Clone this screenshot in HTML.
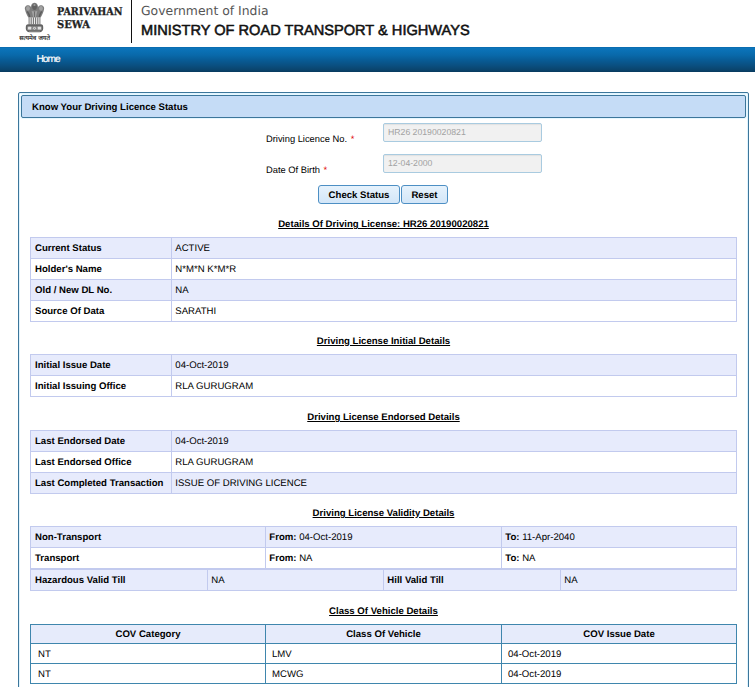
<!DOCTYPE html>
<html lang="en">
<head>
<meta charset="utf-8">
<title>Know Your Driving Licence Status</title>
<style>
*{box-sizing:border-box;}
html,body{margin:0;padding:0;background:#fff;}
body{text-rendering:geometricPrecision;width:755px;height:687px;overflow:hidden;position:relative;font-family:"Liberation Sans",Arial,sans-serif;font-size:9.6px;color:#000;}
#hdr{position:absolute;left:0;top:0;width:755px;height:47px;background:#fff;}
#emblem{position:absolute;left:14px;top:0;}
#brand{position:absolute;left:57px;top:0;}
#vline{position:absolute;left:131px;top:0;width:1px;height:43px;background:#111;}
#gov{position:absolute;left:141px;top:3px;font-family:"DejaVu Sans","Liberation Sans",sans-serif;font-size:12.4px;line-height:16px;color:#555;white-space:nowrap;}
#min{position:absolute;left:141px;top:22px;font-family:"Liberation Sans",sans-serif;font-weight:normal;-webkit-text-stroke:0.55px #111;font-size:14.6px;line-height:18px;color:#111;white-space:nowrap;}
#nav{position:absolute;left:0;top:47px;width:755px;height:25px;background:linear-gradient(#0a6aad 0%,#0b74ba 6%,#0969aa 32%,#085c96 52%,#0a5082 72%,#0a446c 92%,#083a5e 100%);}
#nav a{position:absolute;left:36.5px;top:6px;color:#fff;font-weight:normal;font-size:10.2px;line-height:14px;letter-spacing:-1px;text-decoration:none;-webkit-text-stroke:0.2px #fff;}
#panel{position:absolute;left:18px;top:92px;width:731px;height:620px;border:1px solid #3c769b;border-radius:2px;background:#fff;box-shadow:inset 0 0 0 1px #e0f4fe;}
#phead{position:absolute;left:2px;top:2px;width:725px;height:23px;border:1px solid #3c769b;border-radius:2px;box-shadow:0 0 0 1px #e6f7ff;background:#c5dcf6;font-weight:bold;line-height:23px;padding-left:10px;color:#000;}
.lbl{position:absolute;left:247px;white-space:nowrap;line-height:12px;font-size:9.35px;color:#000;}
.lbl b{color:#e00000;font-weight:normal;margin-left:1px;}
.inp{position:absolute;left:364px;width:159px;height:19px;border:1px solid #a9cbe0;border-radius:2px;background:#f1f1f1;color:#a2a2a2;font-size:8.7px;line-height:17px;padding:0 0 0 4px;box-shadow:inset 0 1px 1px #e2e2e2;}
.btn{position:absolute;top:92px;height:19px;border:1px solid #4d8fc4;border-radius:3px;background:linear-gradient(#e6f2fc,#d3e6f8);font-weight:bold;text-align:center;line-height:19px;color:#000;}
.sec{position:absolute;left:0;width:729px;text-align:center;font-weight:bold;text-decoration:underline;line-height:12px;color:#000;}
table{position:absolute;left:11px;width:707px;border-collapse:collapse;table-layout:fixed;font-size:9.6px;}
table.t td{height:21px;line-height:12px;border:1px solid #c2caee;padding:1px 0 0 4px;vertical-align:middle;color:#000;}
table.t tr:nth-child(odd) td{background:#e7ebfc;}
table.t td.k{font-weight:bold;}
table.t td+td{padding-left:3.3px;}
table.c td,table.c th{height:20px;line-height:12px;border:1px solid #3f86ad;padding:2px 0 0 7px;vertical-align:middle;text-align:left;font-weight:normal;color:#000;}
table.c th{height:19px;background:#e6ebfb;font-weight:bold;text-align:center;padding:2px 0 0 0;line-height:12px;}
table.c td+td{padding-left:6px;}
</style>
</head>
<body>
<div id="hdr">
  <svg id="emblem" width="42" height="44" viewBox="14 0 42 44">
    <g>
      <path d="M25 9.600 C24.300 6.600 26.300 4.900 28.500 5.200 C29.700 5.400 30.600 6.100 31 7.100 L31.200 5.600 C31.500 3.700 33 2.700 34.500 2.700 C36 2.700 37.500 3.700 37.800 5.600 L38 7.100 C38.400 6.100 39.300 5.400 40.500 5.200 C42.700 4.900 44.700 6.600 44 9.600 C43.400 12.600 42 15.200 40.700 17.600 L28.300 17.600 C27 15.200 25.600 12.600 25 9.600 Z" fill="#7d7d7d"/>
      <ellipse cx="34.5" cy="6.800" rx="2.400" ry="3.100" fill="#606060"/>
      <ellipse cx="34.5" cy="5" rx="1.200" ry="0.900" fill="#9a9a9a"/>
      <ellipse cx="28" cy="8.400" rx="1.900" ry="2.300" fill="#a2a2a2"/>
      <ellipse cx="41" cy="8.400" rx="1.900" ry="2.300" fill="#a2a2a2"/>
      <path d="M27.200 11.500 Q29 13.500 29.800 17 M41.800 11.500 Q40 13.500 39.200 17" stroke="#5c5c5c" stroke-width="1.300" fill="none"/>
      <path d="M31.600 10.800 Q34.500 12.200 37.400 10.800 L35.800 17.200 H33.200 Z" fill="#a0a0a0"/>
      <path d="M34.500 11.500V17" stroke="#666" stroke-width="0.900"/>
      <rect x="28.600" y="17.400" width="11.800" height="7.100" fill="#6e6e6e"/>
      <path d="M30.100 17.600V24.400 M32.300 17.600V24.400 M34.500 17.600V24.400 M36.700 17.600V24.400 M38.900 17.600V24.400" stroke="#ececec" stroke-width="1.150"/>
      <path d="M28.200 24.300 H40.800 C42.600 24.300 43.200 25.500 43.200 27 V28.500 C43.200 30.500 41.800 32.200 39.500 32.200 H29.500 C27.200 32.200 25.800 30.500 25.800 28.500 V27 C25.800 25.500 26.400 24.300 28.200 24.300 Z" fill="#626262"/>
      <rect x="27" y="26.200" width="15" height="4.100" rx="1" fill="#8a8a8a"/>
      <rect x="28" y="26.800" width="3.200" height="2.700" rx="0.500" fill="#e2e2e2"/>
      <circle cx="34.5" cy="28.200" r="1.750" fill="#ededed" stroke="#666" stroke-width="0.600"/>
      <circle cx="34.5" cy="28.200" r="0.600" fill="#777"/>
      <rect x="37.800" y="26.800" width="3.200" height="2.700" rx="0.500" fill="#e2e2e2"/>
      <path d="M29 31.300 H40" stroke="#9a9a9a" stroke-width="0.700"/>
    </g>
    <text x="19.300" y="40.400" font-size="6.400" stroke="#222" stroke-width="0.150" font-family="'Liberation Sans','Noto Sans CJK SC','DejaVu Sans',sans-serif" fill="#222" textLength="30.800" lengthAdjust="spacingAndGlyphs">सत्यमेव जयते</text>
  </svg>
  <svg id="brand" width="72" height="34" viewBox="0 0 72 34">
    <g font-family="'DejaVu Serif Condensed','DejaVu Serif','Liberation Serif',serif" font-weight="bold" font-size="10.7" fill="#222" stroke="#222" stroke-width="0.25">
      <text x="0" y="14.8" textLength="65.5" lengthAdjust="spacingAndGlyphs">PARIVAHAN</text>
      <text x="0" y="28.2" textLength="33" lengthAdjust="spacingAndGlyphs">SEWA</text>
    </g>
  </svg>
  <div id="vline"></div>
  <div id="gov">Government of India</div>
  <div id="min">MINISTRY OF ROAD TRANSPORT &amp; HIGHWAYS</div>
</div>
<div id="nav"><a>Home</a></div>

<div id="panel">
  <div id="phead">Know Your Driving Licence Status</div>

  <div class="lbl" style="top:40px">Driving Licence No. <b>*</b></div>
  <div class="inp" style="top:30px">HR26 20190020821</div>
  <div class="lbl" style="top:71px">Date Of Birth <b>*</b></div>
  <div class="inp" style="top:61px">12-04-2000</div>
  <div class="btn" style="left:299px;width:82px">Check Status</div>
  <div class="btn" style="left:382px;width:47px">Reset</div>

  <div class="sec" style="top:126px">Details Of Driving License: HR26 20190020821</div>
  <table class="t" style="top:144px">
    <colgroup><col style="width:141px"><col></colgroup>
    <tr><td class="k">Current Status</td><td>ACTIVE</td></tr>
    <tr><td class="k">Holder's Name</td><td>N*M*N K*M*R</td></tr>
    <tr><td class="k">Old / New DL No.</td><td>NA</td></tr>
    <tr><td class="k">Source Of Data</td><td>SARATHI</td></tr>
  </table>

  <div class="sec" style="top:243px">Driving License Initial Details</div>
  <table class="t" style="top:261px">
    <colgroup><col style="width:141px"><col></colgroup>
    <tr><td class="k">Initial Issue Date</td><td>04-Oct-2019</td></tr>
    <tr><td class="k">Initial Issuing Office</td><td>RLA GURUGRAM</td></tr>
  </table>

  <div class="sec" style="top:319px">Driving License Endorsed Details</div>
  <table class="t" style="top:337px">
    <colgroup><col style="width:141px"><col></colgroup>
    <tr><td class="k">Last Endorsed Date</td><td>04-Oct-2019</td></tr>
    <tr><td class="k">Last Endorsed Office</td><td>RLA GURUGRAM</td></tr>
    <tr><td class="k">Last Completed Transaction</td><td>ISSUE OF DRIVING LICENCE</td></tr>
  </table>

  <div class="sec" style="top:415px">Driving License Validity Details</div>
  <table class="t" style="top:433px">
    <colgroup><col style="width:235px"><col style="width:236px"><col></colgroup>
    <tr><td class="k">Non-Transport</td><td><b>From:</b> 04-Oct-2019</td><td><b>To:</b> 11-Apr-2040</td></tr>
    <tr><td class="k">Transport</td><td><b>From:</b> NA</td><td><b>To:</b> NA</td></tr>
  </table>
  <table class="t" style="top:476px">
    <colgroup><col style="width:177px"><col style="width:176px"><col style="width:177px"><col></colgroup>
    <tr><td class="k">Hazardous Valid Till</td><td>NA</td><td class="k">Hill Valid Till</td><td>NA</td></tr>
  </table>

  <div class="sec" style="top:513px">Class Of Vehicle Details</div>
  <table class="c" style="top:531px">
    <colgroup><col style="width:235px"><col style="width:236px"><col></colgroup>
    <tr><th>COV Category</th><th>Class Of Vehicle</th><th>COV Issue Date</th></tr>
    <tr><td>NT</td><td>LMV</td><td>04-Oct-2019</td></tr>
    <tr><td>NT</td><td>MCWG</td><td>04-Oct-2019</td></tr>
  </table>
</div>
</body>
</html>
